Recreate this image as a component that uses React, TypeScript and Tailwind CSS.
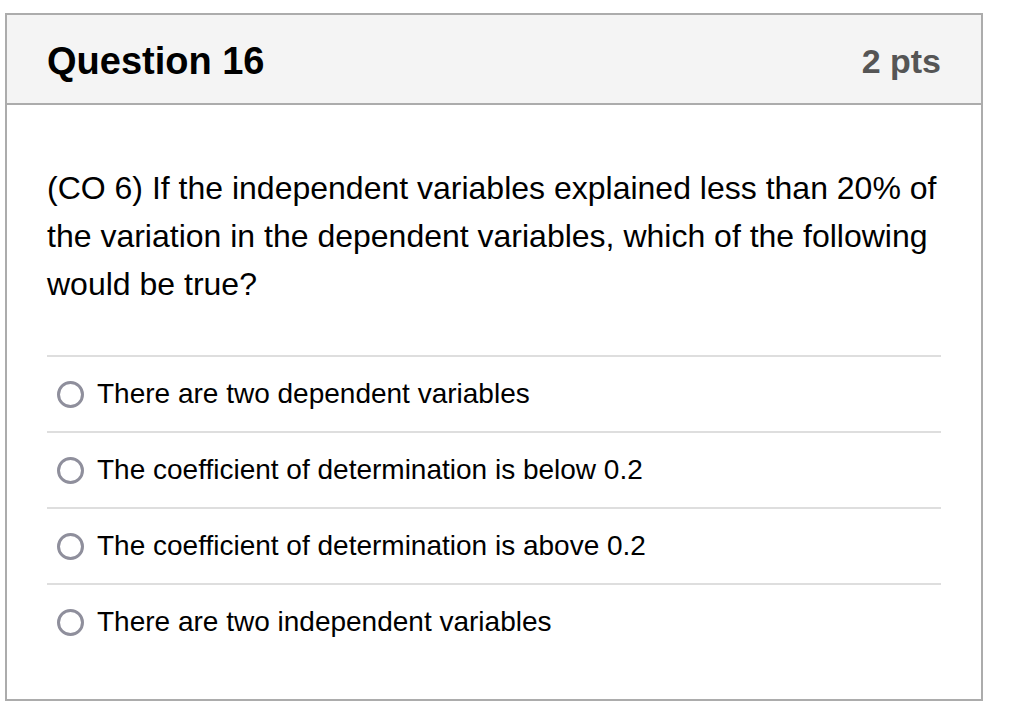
import React from 'react';

const options = [
  'There are two dependent variables',
  'The coefficient of determination is below 0.2',
  'The coefficient of determination is above 0.2',
  'There are two independent variables',
];

const Radio = () => (
  <span className="inline-block w-[27px] h-[27px] rounded-full border-[3.5px] border-[#8f8f9c] bg-white flex-shrink-0" />
);

const App = () => {
  return (
    <div className="w-[1017px] h-[717px] bg-white pt-[13px] pl-[5px] font-['Liberation_Sans',Arial,sans-serif]">
      <div className="w-[978px] h-[688px] border-2 border-[#acacac] bg-white">
        <div className="h-[90px] bg-[#f4f4f4] border-b-2 border-[#acacac] flex items-center justify-between px-[40px] pt-[3px]">
          <h2 className="text-[38px] font-bold text-black leading-none">Question 16</h2>
          <span className="text-[34px] font-bold text-[#555555] leading-none">2 pts</span>
        </div>

        <div className="px-[40px] pt-[59px]">
          <p className="text-[32px] leading-[48px] text-black">
            (CO 6) If the independent variables explained less than 20% of the variation in the dependent variables, which of the following would be true?
          </p>

          <div className="mt-[47px]">
            {options.map((opt) => (
              <div key={opt} className="h-[76px] border-t-2 border-[#dedede] flex items-center pl-[10px] gap-[13px]">
                <Radio />
                <span className="text-[28px] text-black leading-none">{opt}</span>
              </div>
            ))}
          </div>
        </div>
      </div>
    </div>
  );
};

export default App;
